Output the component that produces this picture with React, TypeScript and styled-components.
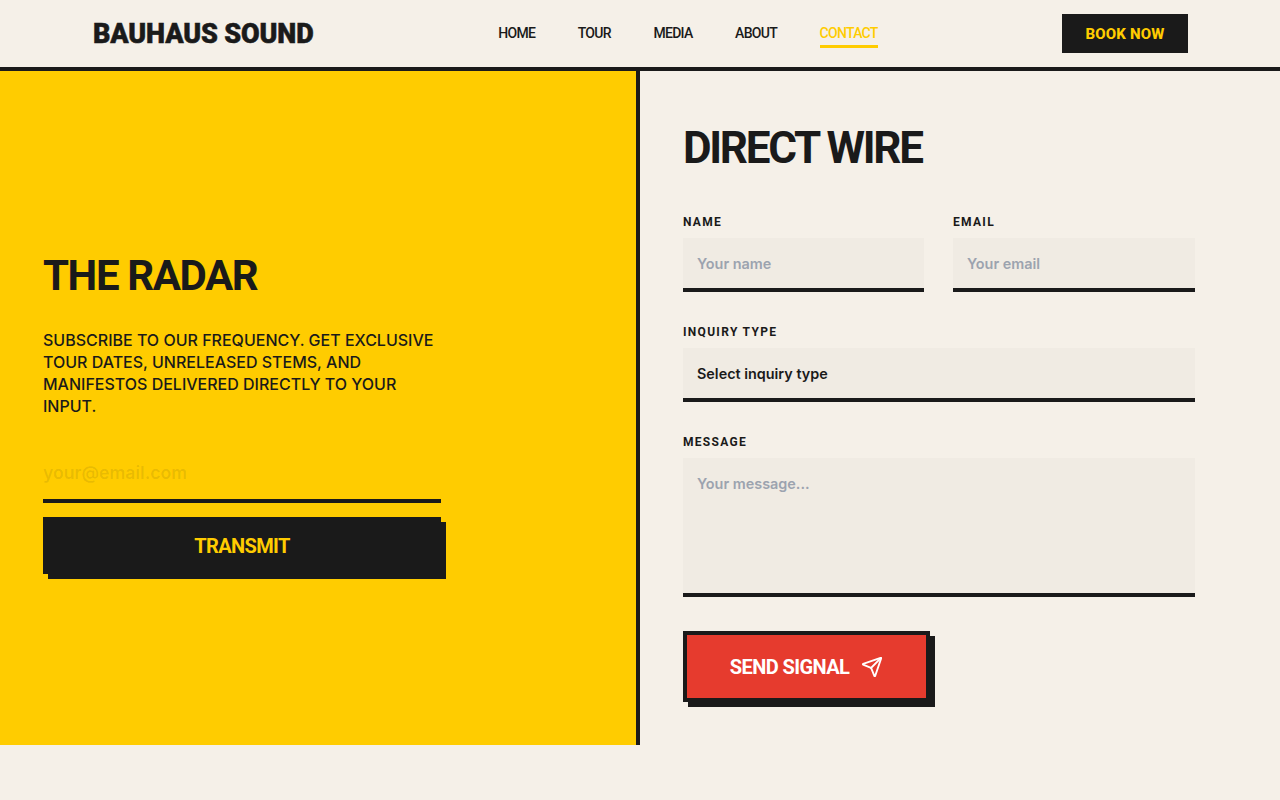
import React from "react";
import styled, { createGlobalStyle } from "styled-components";
import { Send } from "lucide-react";

const INK = "#1a1a1a";
const YELLOW = "#ffcc00";
const PAPER = "#f5f0e8";
const DISPLAY = `Roboto, "Liberation Sans", sans-serif`;
const BODY = `Inter, "Noto Sans", sans-serif`;

const GlobalStyle = createGlobalStyle`
  html, body {
    margin: 0;
    background: ${PAPER};
  }
  * {
    box-sizing: border-box;
  }
`;

const Header = styled.header`
  height: 71px;
  border-bottom: 4px solid ${INK};
  display: flex;
  justify-content: space-between;
  align-items: center;
  padding: 0 92px 0 93px;
`;

const Logo = styled.div`
  width: 221px;
  white-space: nowrap;
  font-family: ${DISPLAY};
  font-size: 27px;
  font-weight: 900;
  letter-spacing: -0.15px;
  -webkit-text-stroke: 0.5px ${INK};
  color: ${INK};
`;

const Nav = styled.nav`
  display: flex;
  gap: 42.5px;
`;

const NavLink = styled.a<{ $active?: boolean }>`
  font-family: ${DISPLAY};
  font-size: 14px;
  font-weight: 500;
  letter-spacing: -0.7px;
  line-height: 20px;
  padding: 4px 0 2px;
  color: ${(p) => (p.$active ? YELLOW : INK)};
  border-bottom: 3px solid ${(p) => (p.$active ? YELLOW : "transparent")};
`;

const BookButton = styled.button`
  width: 126px;
  height: 39px;
  border: none;
  background: ${INK};
  color: ${YELLOW};
  font-family: ${DISPLAY};
  font-size: 15px;
  font-weight: 800;
  letter-spacing: 0.15px;
`;

const Main = styled.main`
  display: grid;
  grid-template-columns: 1fr 1fr;
`;

const RadarPanel = styled.section`
  background: ${YELLOW};
  border-right: 4px solid ${INK};
  padding: 45px 43px 43px;
  display: flex;
  flex-direction: column;
  justify-content: center;
`;

const RadarTitle = styled.h2`
  margin: 0 0 22px;
  font-family: ${DISPLAY};
  font-size: 42px;
  line-height: 63px;
  font-weight: 700;
  letter-spacing: -1.4px;
  color: ${INK};
`;

const RadarText = styled.p`
  margin: 0 0 34px;
  max-width: 398px;
  font-family: ${BODY};
  font-size: 16px;
  font-weight: 500;
  line-height: 22px;
  color: ${INK};
`;

const RadarForm = styled.form`
  width: 398px;
  display: flex;
  flex-direction: column;
  gap: 14px;
`;

const RadarInput = styled.input`
  height: 52px;
  padding: 0 0 5px;
  border: none;
  border-bottom: 4px solid ${INK};
  background: transparent;
  outline: none;
  font-family: ${BODY};
  font-size: 17.6px;
  font-weight: 600;
  color: ${INK};

  &::placeholder {
    color: rgba(26, 26, 26, 0.1);
    opacity: 1;
  }
`;

const TransmitButton = styled.button`
  height: 57px;
  border: none;
  background: ${INK};
  box-shadow: 5px 5px 0 ${INK};
  color: ${YELLOW};
  font-family: ${DISPLAY};
  font-size: 20px;
  font-weight: 700;
  letter-spacing: -0.6px;
`;

const WirePanel = styled.section`
  padding: 43px;
`;

const WireTitle = styled.h1`
  margin: 0 0 31px;
  font-family: ${DISPLAY};
  font-size: 44px;
  line-height: 68px;
  font-weight: 700;
  letter-spacing: -2.3px;
  color: ${INK};
`;

const WireForm = styled.form`
  width: 512px;
  display: flex;
  flex-direction: column;
  gap: 31px;
`;

const FieldRow = styled.div`
  display: grid;
  grid-template-columns: 241px 242px;
  gap: 29px;
`;

const Field = styled.div`
  display: flex;
  flex-direction: column;
  gap: 7px;
`;

const Label = styled.label`
  font-family: ${DISPLAY};
  font-size: 12px;
  line-height: 18px;
  font-weight: 700;
  letter-spacing: 1.3px;
  color: ${INK};
`;

const controlStyles = `
  width: 100%;
  border: none;
  border-bottom: 4px solid ${INK};
  background: #f0ebe3;
  padding: 14px;
  outline: none;
  font-family: ${BODY};
  font-size: 14.4px;
  font-weight: 600;
  color: ${INK};

  &::placeholder {
    color: #9ca3af;
    opacity: 1;
  }
`;

const TextInput = styled.input`
  ${controlStyles}
  height: 54px;
`;

const SelectInput = styled.select`
  ${controlStyles}
  height: 54px;
  appearance: none;
`;

const MessageInput = styled.textarea`
  ${controlStyles}
  height: 139px;
  padding-top: 17px;
  resize: none;
  display: block;
`;

const SendButton = styled.button`
  align-self: flex-start;
  margin-top: 3px;
  width: 247px;
  height: 71px;
  border: 4px solid ${INK};
  background: #e63b2e;
  box-shadow: 5px 5px 0 ${INK};
  color: #fff;
  font-family: ${DISPLAY};
  font-size: 20px;
  font-weight: 700;
  letter-spacing: -0.6px;
  display: flex;
  align-items: center;
  justify-content: center;
  gap: 12px;
`;

const App = () => {
  return (
    <>
      <GlobalStyle />
      <Header>
        <Logo>BAUHAUS SOUND</Logo>
        <Nav>
          <NavLink>HOME</NavLink>
          <NavLink>TOUR</NavLink>
          <NavLink>MEDIA</NavLink>
          <NavLink>ABOUT</NavLink>
          <NavLink $active>CONTACT</NavLink>
        </Nav>
        <BookButton>BOOK NOW</BookButton>
      </Header>
      <Main>
        {/* newsletter side */}
        <RadarPanel>
          <RadarTitle>THE RADAR</RadarTitle>
          <RadarText>
            SUBSCRIBE TO OUR FREQUENCY. GET EXCLUSIVE TOUR DATES, UNRELEASED
            STEMS, AND MANIFESTOS DELIVERED DIRECTLY TO YOUR INPUT.
          </RadarText>
          <RadarForm>
            <RadarInput placeholder="your@email.com" />
            <TransmitButton type="button">TRANSMIT</TransmitButton>
          </RadarForm>
        </RadarPanel>
        {/* contact form side */}
        <WirePanel>
          <WireTitle>DIRECT WIRE</WireTitle>
          <WireForm>
            <FieldRow>
              <Field>
                <Label>NAME</Label>
                <TextInput placeholder="Your name" />
              </Field>
              <Field>
                <Label>EMAIL</Label>
                <TextInput placeholder="Your email" />
              </Field>
            </FieldRow>
            <Field>
              <Label>INQUIRY TYPE</Label>
              <SelectInput>
                <option>Select inquiry type</option>
              </SelectInput>
            </Field>
            <Field>
              <Label>MESSAGE</Label>
              <MessageInput placeholder="Your message..." />
            </Field>
            <SendButton type="button">
              SEND SIGNAL
              <Send size={22} />
            </SendButton>
          </WireForm>
        </WirePanel>
      </Main>
    </>
  );
};

export default App;
